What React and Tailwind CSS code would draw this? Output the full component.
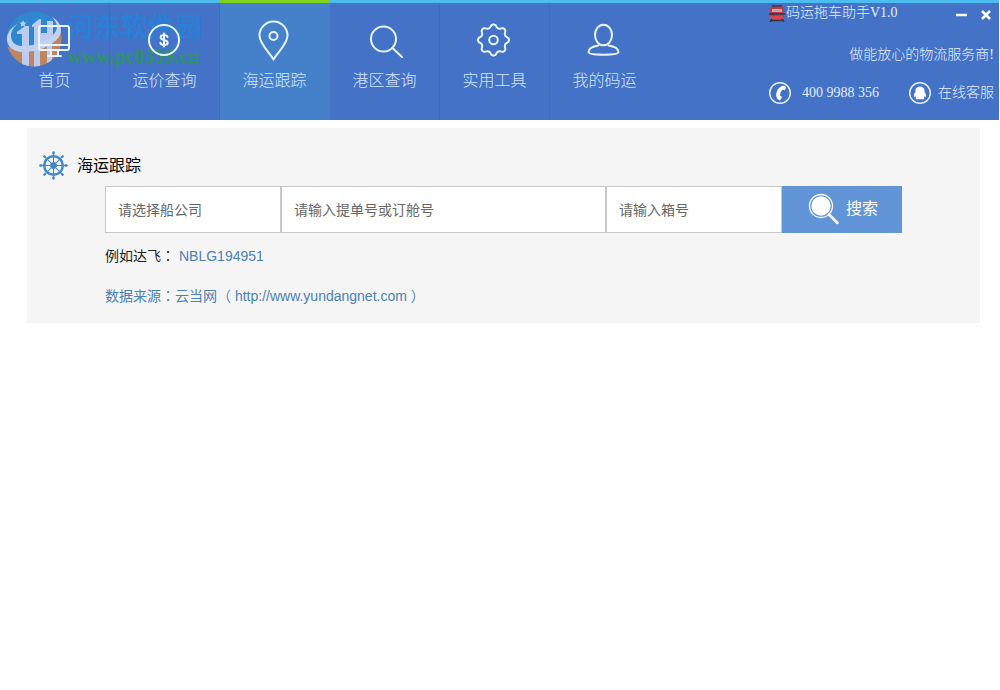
import { useState } from 'react';

// scalloped outline of the tools icon
const gearPoints = Array.from({ length: 128 }, (_, i) => {
  const angle = (i / 128) * Math.PI * 2;
  const wave = Math.cos(angle * 8);
  const r = 14 + 1.5 * Math.sign(wave) * Math.pow(Math.abs(wave), 0.7);
  return `${(20.5 + r * Math.sin(angle)).toFixed(2)},${(21 - r * Math.cos(angle)).toFixed(2)}`;
}).join(' ');

const NavIcon = ({ children }) => (
  <svg
    viewBox="0 0 44 44"
    className="w-11 h-11"
    fill="none"
    stroke="currentColor"
    strokeWidth="2"
    strokeLinecap="round"
    strokeLinejoin="round"
    aria-hidden="true"
  >
    {children}
  </svg>
);

const navItems = [
  {
    id: 'home',
    label: '首页',
    icon: (
      <NavIcon>
        <rect x="6" y="7" width="30" height="24" rx="2" />
        <path d="M6 26h30M18 31v6M25 31v6M15 37h13" />
      </NavIcon>
    ),
  },
  {
    id: 'price',
    label: '运价查询',
    icon: (
      <NavIcon>
        <circle cx="21" cy="21" r="15" />
        <path d="M24.500 18c-.5-1.500-1.700-2-3.500-2-2 0-3.300.9-3.300 2.400 0 3.400 7 1.700 7 5.200 0 1.600-1.500 2.500-3.500 2.500s-3.400-.8-3.800-2.400M21 14.500v13" />
      </NavIcon>
    ),
  },
  {
    id: 'tracking',
    label: '海运跟踪',
    icon: (
      <NavIcon>
        <path d="M20.500 40.500C17 34 6.500 25 6.500 16.500a14 14 0 0 1 28 0C34.500 25 24 34 20.500 40.500z" />
        <circle cx="20.500" cy="17" r="4" />
      </NavIcon>
    ),
  },
  {
    id: 'port',
    label: '港区查询',
    icon: (
      <NavIcon>
        <circle cx="20.500" cy="20" r="12.500" />
        <path d="M29.500 29l9.500 9" />
      </NavIcon>
    ),
  },
  {
    id: 'tools',
    label: '实用工具',
    icon: (
      <NavIcon>
        <polygon points={gearPoints} />
        <circle cx="20.500" cy="21" r="4.300" />
      </NavIcon>
    ),
  },
  {
    id: 'mine',
    label: '我的码运',
    icon: (
      <NavIcon>
        <ellipse cx="20.500" cy="16" rx="8.500" ry="10.300" />
        <path d="M15.500 26.500c-5 .8-10 3-10 6.500 0 2 4.500 2.700 15 2.700s15-.7 15-2.700c0-3.500-5-5.700-10-6.500" />
      </NavIcon>
    ),
  },
];

function TrainIcon() {
  return (
    <svg viewBox="0 0 16 18" className="w-4 h-[18px]" aria-hidden="true">
      <path d="M3 1h10l2 4v8H1V5z" fill="#b5404c" />
      <path d="M3 1h10v2H3z" fill="#5a3a4c" />
      <rect x="3" y="5" width="10" height="3" fill="#c9a3b4" />
      <rect x="0" y="9" width="16" height="2" fill="#4a3846" />
      <rect x="2" y="12" width="12" height="3" fill="#d8454e" />
      <path d="M3 15l-2 3M13 15l2 3M2 16.500h12" stroke="#3a3040" strokeWidth="1.500" />
    </svg>
  );
}

function PhoneIcon() {
  return (
    <svg viewBox="0 0 24 24" className="w-6 h-6" aria-hidden="true">
      <circle cx="12" cy="12" r="10.300" fill="none" stroke="currentColor" strokeWidth="1.500" />
      <path d="M15 4.800l2.200.4c.8.300 1 1 .7 1.700l-.8 1.700c-.3.700-1 .8-1.700.5l-1-.4c-1.600 1.700-2.400 3.800-2.300 6l1 .5c.7.400.9 1 .5 1.700l-1 1.600c-.4.700-1.100.9-1.900.4-1.800-1.200-2.700-3-2.500-5.400.3-4 2.700-7.400 6.800-8.700z" fill="#fff" />
    </svg>
  );
}

function ServiceIcon() {
  return (
    <svg viewBox="0 0 24 24" className="w-6 h-6" aria-hidden="true">
      <circle cx="12" cy="12" r="10.300" fill="none" stroke="currentColor" strokeWidth="1.500" />
      <path d="M12 5.500c-3.200 0-4.800 2.300-4.600 5.500-1.200 1.500-1.900 3.300-1.400 4.700.4.300.9 0 1.300-.5.200.7.500 1.200 1 1.600-.8.500-.8 1.200.2 1.400h7c1-.2 1-.9.200-1.400.5-.4.800-.9 1-1.600.4.500.9.800 1.300.5.500-1.400-.2-3.200-1.400-4.700.2-3.200-1.400-5.500-4.600-5.500z" fill="#fff" />
    </svg>
  );
}

function HelmIcon() {
  const spokes = [0, 45, 90, 135, 180, 225, 270, 315];
  return (
    <svg viewBox="0 0 30 30" className="w-[30px] h-[30px] text-[#4289c7]" fill="none" stroke="currentColor" aria-hidden="true">
      <circle cx="14.500" cy="14.500" r="9.300" strokeWidth="2.500" />
      <circle cx="14.500" cy="14.500" r="3" fill="currentColor" />
      {spokes.map((deg) => (
        <g key={deg} transform={`rotate(${deg} 14.5 14.5)`}>
          <path d="M14.500 13V3" strokeWidth="1" />
          <path d="M14.500 2.500V1.500" strokeWidth="2.400" strokeLinecap="round" />
        </g>
      ))}
    </svg>
  );
}

function Watermark() {
  return (
    <div className="absolute left-1 top-2 flex gap-[3px] pointer-events-none select-none" aria-hidden="true">
      <svg viewBox="0 0 60 60" className="w-[60px] h-[60px]">
        <defs>
          <clipPath id="disc">
            <circle cx="30" cy="31" r="27.500" />
          </clipPath>
        </defs>
        <g clipPath="url(#disc)">
          <rect width="60" height="60" fill="#2f87d0" />
          <path d="M0 38C20 44 42 38 60 20v40H0z" fill="#bd8560" />
          <path d="M13 24l8-6h4v21H18V26h-5zM28 17l7-6h2v26h-7V19h-2zM37 25h6V13h6v16l-12 8z" fill="#bccbee" />
          <path d="M18 43h7v17h-7zM30 40h6v20h-6zM43 34h5v22h-5z" fill="#bccbee" />
        </g>
        <path d="M14 16C5 21 3 37 18 38c15 0 29-6 34-15 2-5 0-10-4-14 9 5 11 13 7 20-7 9-22 15-36 15C-1 44-2 23 14 16z" fill="#c3d1f1" />
        <path d="M19 12l1 2.500 2.600.1-2 1.700.7 2.600-2.300-1.500-2.300 1.500.7-2.600-2-1.700 2.600-.1z" fill="#c3d1f1" />
      </svg>
      <div className="pt-1 opacity-80">
        <div className="h-8 text-[27px] leading-8 font-bold text-[#2384dc]">河东软件园</div>
        <div className="text-[20px] leading-6 font-bold text-[#2c9c50] font-['Liberation_Serif',serif]">www.pc0359.cn</div>
      </div>
    </div>
  );
}

function Header({ active, onChange }) {
  return (
    <header className="relative flex mr-px h-[120px] bg-[#4472c7] text-[#e6f6ff]">
      <Watermark />

      <nav className="relative flex shrink-0">
        {navItems.map((item) => (
          <button
            key={item.id}
            type="button"
            onClick={() => onChange(item.id)}
            className={`flex flex-col items-center w-[110px] pt-4 pr-px border-t-[3px] ${
              active === item.id
                ? 'bg-[#4580cb] border-t-[#80d11c]'
                : 'border-t-[#4dbcf0] shadow-[inset_-1px_0_#3f6cc0] last:shadow-none'
            }`}
          >
            {item.icon}
            <span className="pt-1.5 text-base leading-6 font-light text-[#d3e6ff]">{item.label}</span>
          </button>
        ))}
      </nav>

      <div className="flex flex-col flex-1 items-end border-t-[3px] border-t-[#4dbcf0] pr-[5px] text-sm font-light text-[#e2efff] font-['Liberation_Serif','Noto_Sans_CJK_SC',serif]">
        {/* Title bar */}
        <div className="flex w-[225px] items-center gap-px h-5">
          <TrainIcon />
          <h1 className="leading-5">码运拖车助手V1.0</h1>
          <div className="flex ml-auto gap-3 pt-1 text-white">
            <button type="button" aria-label="最小化">
              <svg viewBox="0 0 14 14" className="w-3.5 h-3.5" stroke="currentColor" strokeWidth="2.500">
                <path d="M2 7h11" />
              </svg>
            </button>
            <button type="button" aria-label="关闭">
              <svg viewBox="0 0 14 14" className="w-3.5 h-3.5" stroke="currentColor" strokeWidth="2.500">
                <path d="M2 3l8 8M10 3l-8 8" />
              </svg>
            </button>
          </div>
        </div>

        <p className="pt-5 leading-6">做能放心的物流服务商!</p>

        <div className="flex w-[226px] items-center justify-between pt-3.5">
          <div className="flex items-center gap-2.5">
            <PhoneIcon />
            <span className="leading-6">400 9988 356</span>
          </div>
          <a href="#service" className="flex items-center gap-1.5">
            <ServiceIcon />
            <span className="leading-6">在线客服</span>
          </a>
        </div>
      </div>
    </header>
  );
}

// full-width colon centred in its cell
const Colon = () => (
  <span lang="zh-TW" className="font-['Noto_Sans_CJK_TC',sans-serif]">：</span>
);

function TrackingPanel() {
  const inputClass =
    'h-[47px] border border-[#c8c8c8] bg-white px-3 text-sm text-[#555] placeholder:text-[#666] outline-none';

  return (
    <section className="ml-[27px] mr-5 mt-2 bg-[#f5f5f5] pt-[23px] pb-4 pl-3">
      <div className="flex items-center gap-2 h-[30px]">
        <HelmIcon />
        <h2 className="text-base leading-6 text-black">海运跟踪</h2>
      </div>

      <form className="flex pl-[66px] pt-[5px]" onSubmit={(e) => e.preventDefault()}>
        <input className={`${inputClass} w-44`} type="text" aria-label="船公司" placeholder="请选择船公司" />
        <input className={`${inputClass} w-[325px]`} type="text" aria-label="提单号或订舱号" placeholder="请输入提单号或订舱号" />
        <input className={`${inputClass} w-44`} type="text" aria-label="箱号" placeholder="请输入箱号" />
        <button type="submit" className="flex items-center justify-center gap-1.5 w-[120px] h-[47px] pb-0.5 pl-0.5 bg-[#6195d8] text-white">
          <svg viewBox="0 0 32 32" className="w-8 h-8" aria-hidden="true">
            <circle cx="13" cy="13" r="11.500" fill="none" stroke="#fff" strokeWidth="1.300" />
            <circle cx="13" cy="13" r="9.700" fill="#fff" />
            <path d="M21 21.500l8.500 8.500" stroke="#fff" strokeWidth="2.500" strokeLinecap="round" />
          </svg>
          <span className="text-base leading-6">搜索</span>
        </button>
      </form>

      <div className="pl-[66px] pt-2.5 text-sm leading-6 text-[#4a80b8]">
        <p className="h-6">
          <span className="text-[#222]">例如达飞<Colon /></span>
          <a href="#NBLG194951" className="pl-1">NBLG194951</a>
        </p>
        <p className="h-10 pt-4">
          <a href="#yundangnet">数据来源<Colon />云当网（ http://www.yundangnet.com ）</a>
        </p>
      </div>
    </section>
  );
}

export default function App() {
  const [active, setActive] = useState('tracking');

  return (
    <div className="min-h-screen bg-white font-['Liberation_Sans','Noto_Sans_CJK_SC',sans-serif]" lang="zh-CN">
      <Header active={active} onChange={setActive} />
      <main>
        <TrackingPanel />
      </main>
    </div>
  );
}
